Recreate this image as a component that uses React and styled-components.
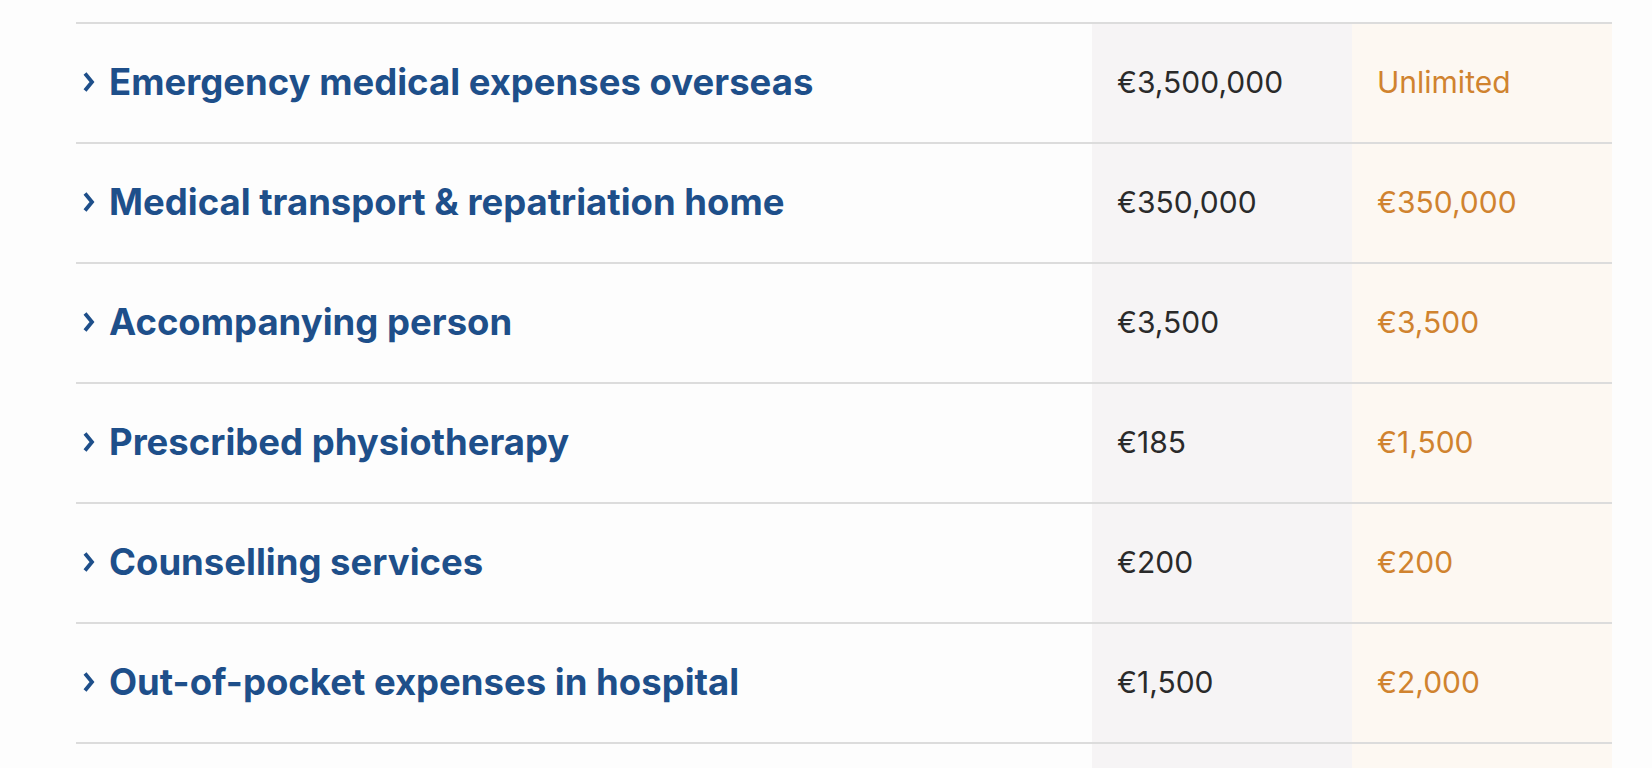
import styled, { createGlobalStyle } from "styled-components"

const GlobalStyle = createGlobalStyle`
    html, body {
        margin: 0;
        padding: 0;
        background-color: #fdfdfd;
        overflow: hidden;
    }
`

const Pagina = styled.div`
    padding: 22px 0 0 76px;
    height: 746px;
    overflow: hidden;
`

const Tabela = styled.div`
    display: grid;
    grid-template-columns: 1016px 260px 260px;
    width: 1536px;
    border-top: 2px solid #dcdcdc;
`

const Linha = styled.div`
    display: contents;
    & > div {
        box-sizing: border-box;
        height: 120px;
        border-bottom: 2px solid #dcdcdc;
    }
`

const Titulo = styled.div`
    display: flex;
    align-items: center;
    gap: 13px;
    padding-left: 6px;
    padding-bottom: 3px;
    font-family: "Inter", "Lato", sans-serif;
    font-weight: 700;
    font-size: 36.5px;
    color: #1e4f8a;
    cursor: pointer;
    svg {
        flex-shrink: 0;
    }
`

const Valor = styled.div`
    display: flex;
    align-items: center;
    padding-left: 25px;
    padding-bottom: 2px;
    font-family: "Inter", "Lato", sans-serif;
    font-size: 30px;
    color: ${props => props.$destaque ? '#d0832f' : '#2a2a2a'};
    background-color: ${props => props.$destaque ? '#fdf8f2' : '#f6f4f5'};
`

const Seta = () => (
    <svg width="14" height="22" viewBox="0 0 14 22">
        <polyline points="3,2.5 10,11 3,19.5" fill="none" stroke="#1e4f8a" strokeWidth="3.8" strokeLinejoin="miter" />
    </svg>
)

const coberturas = [
    { titulo: "Emergency medical expenses overseas", basico: "€3,500,000", plus: "Unlimited" },
    { titulo: "Medical transport & repatriation home", basico: "€350,000", plus: "€350,000" },
    { titulo: "Accompanying person", basico: "€3,500", plus: "€3,500" },
    { titulo: "Prescribed physiotherapy", basico: "€185", plus: "€1,500" },
    { titulo: "Counselling services", basico: "€200", plus: "€200" },
    { titulo: "Out-of-pocket expenses in hospital", basico: "€1,500", plus: "€2,000" },
    { titulo: "", basico: "", plus: "" },
]

const App = () => {
    return(<>
        <GlobalStyle />
        <Pagina>
            <Tabela>
                {coberturas.map((item, i) => (
                    <Linha key={i}>
                        <Titulo>{item.titulo && <Seta />}{item.titulo}</Titulo>
                        <Valor>{item.basico}</Valor>
                        <Valor $destaque>{item.plus}</Valor>
                    </Linha>
                ))}
            </Tabela>
        </Pagina>
    </>)
}

export default App
